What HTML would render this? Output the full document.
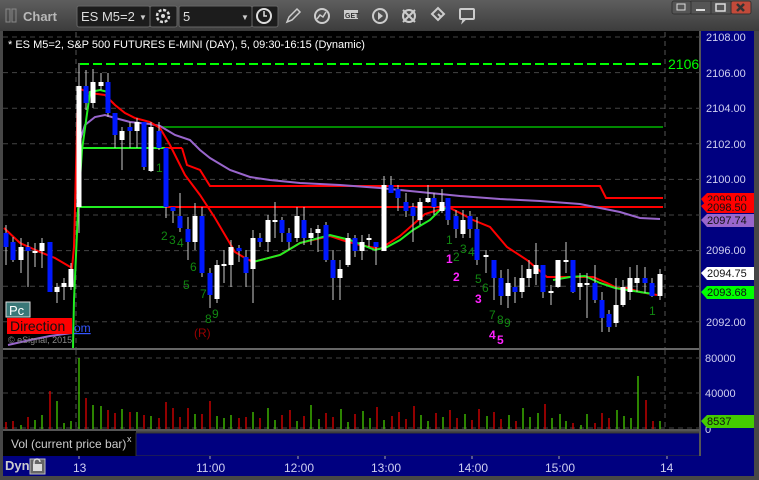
<!DOCTYPE html>
<html><head><meta charset="utf-8"><style>
body{margin:0;width:759px;height:480px;overflow:hidden;background:#4a4a4a;font-family:"Liberation Sans",sans-serif;}
svg{position:absolute;left:0;top:0}
</style></head><body>
<svg id="s" width="759" height="480" xmlns="http://www.w3.org/2000/svg" font-family="Liberation Sans, sans-serif">
<defs><linearGradient id="tb" x1="0" y1="0" x2="0" y2="1"><stop offset="0" stop-color="#5e5e5e"/><stop offset="1" stop-color="#3c3c3c"/></linearGradient></defs>
<rect x="0" y="0" width="759" height="480" fill="#474747"/>
<rect x="0" y="0" width="759" height="31" fill="url(#tb)"/>
<rect x="6" y="9" width="4" height="13" fill="none" stroke="#888"/><rect x="12" y="9" width="4" height="13" fill="none" stroke="#888"/>
<text x="23" y="21" font-size="13" font-weight="bold" fill="#b8b8b8">Chart</text>
<rect x="77" y="6" width="73" height="21" rx="2" fill="#1c1c1c" stroke="#666"/>
<text x="81" y="21" font-size="13" fill="#ddd">ES M5=2</text><text x="139" y="20" font-size="8" fill="#ccc">▼</text>
<rect x="150" y="6" width="27" height="21" rx="2" fill="#1c1c1c" stroke="#666"/>
<circle cx="163" cy="16" r="6" fill="none" stroke="#ddd" stroke-width="2.5" stroke-dasharray="3 1.7"/><circle cx="163" cy="16" r="2" fill="#ddd"/>
<rect x="179" y="6" width="73" height="21" rx="2" fill="#1c1c1c" stroke="#666"/>
<text x="183" y="21" font-size="13" fill="#ddd">5</text><text x="241" y="20" font-size="8" fill="#ccc">▼</text>
<rect x="252" y="6" width="26" height="21" rx="2" fill="#1c1c1c" stroke="#666"/>
<circle cx="264" cy="16" r="7" fill="none" stroke="#ddd" stroke-width="2"/><path d="M264 11v5h3" stroke="#ddd" stroke-width="1.5" fill="none"/>
<path d="M287 22l2-5 8-8 3 3-8 8z" fill="none" stroke="#ccc" stroke-width="1.5"/>
<circle cx="322" cy="16" r="7" fill="none" stroke="#ccc" stroke-width="2"/><path d="M317 19l3-4 3 2 3-5" stroke="#ccc" fill="none" stroke-width="1.5"/>
<rect x="344" y="10" width="14" height="9" fill="#ccc"/><text x="345" y="18" font-size="7" font-weight="bold" fill="#333">GET</text>
<circle cx="380" cy="16" r="7" fill="none" stroke="#ccc" stroke-width="2"/><path d="M378 12v8l5-4z" fill="#ccc"/>
<circle cx="409" cy="16" r="6" fill="none" stroke="#ccc" stroke-width="2"/><path d="M403 10l12 12M415 10l-12 12" stroke="#ccc" stroke-width="2"/>
<path d="M432 14l6-6 6 6-6 6z M438 14l3 3" fill="none" stroke="#ccc" stroke-width="2"/>
<rect x="460" y="9" width="14" height="10" rx="1" fill="none" stroke="#ccc" stroke-width="2"/><path d="M463 19l-1 4 4-4" fill="#ccc" stroke="#ccc"/>
<rect x="672" y="1" width="19" height="13" rx="2" fill="#555" stroke="#333"/><rect x="677" y="4" width="8" height="6" fill="none" stroke="#ddd"/>
<rect x="691" y="1" width="20" height="13" fill="#555" stroke="#333"/><rect x="696" y="9" width="9" height="2" fill="#ddd"/>
<rect x="711" y="1" width="20" height="13" fill="#555" stroke="#333"/><rect x="716" y="4" width="9" height="7" fill="none" stroke="#ddd" stroke-width="1.5"/>
<rect x="731" y="1" width="20" height="13" rx="2" fill="#c24a3a" stroke="#333"/><path d="M737 4l7 7M744 4l-7 7" stroke="#333" stroke-width="2.5"/>
<rect x="3" y="31" width="697" height="317" fill="#000"/>
<rect x="700" y="31" width="54" height="445" fill="#000080"/>
<rect x="3" y="348" width="697" height="2" fill="#666"/>
<rect x="3" y="350" width="697" height="80" fill="#000"/>
<rect x="3" y="429" width="697" height="2" fill="#555"/>
<rect x="3" y="431" width="133" height="25" fill="#000"/>
<rect x="136" y="433" width="564" height="23" fill="#000080" stroke="#333"/>
<rect x="3" y="456" width="751" height="20" fill="#000080"/>
<rect x="699" y="31" width="2" height="425" fill="#555"/>
<g id="grid" stroke="#444" stroke-dasharray="5 4"></g>
<line x1="76" y1="32" x2="76" y2="348" stroke="#555" stroke-dasharray="5 4"/>
<line x1="665" y1="32" x2="665" y2="348" stroke="#555" stroke-dasharray="5 4"/>
<line x1="76" y1="350" x2="76" y2="429" stroke="#555" stroke-dasharray="5 4"/>
<line x1="665" y1="350" x2="665" y2="429" stroke="#555" stroke-dasharray="5 4"/>
<line x1="3" y1="358" x2="700" y2="358" stroke="#444" stroke-dasharray="5 4"/>
<line x1="3" y1="393" x2="700" y2="393" stroke="#444" stroke-dasharray="5 4"/>
<line x1="3" y1="428" x2="700" y2="428" stroke="#444" stroke-dasharray="5 4"/>
<line x1="80" y1="64" x2="663" y2="64" stroke="#00ff00" stroke-width="2" stroke-dasharray="9 4"/>
<text x="668" y="69" font-size="14" fill="#00ff00">2106</text>
<line x1="160" y1="127" x2="663" y2="127" stroke="#008800" stroke-width="2"/>
<line x1="79" y1="148" x2="165" y2="148" stroke="#22ee22" stroke-width="2"/>
<line x1="165" y1="148" x2="182" y2="148" stroke="#ff0000" stroke-width="2"/>
<line x1="79" y1="207" x2="165" y2="207" stroke="#22ee22" stroke-width="2"/>
<line x1="165" y1="207" x2="663" y2="207" stroke="#ff0000" stroke-width="2"/>
<polyline points="182,148 187,165 200,170 210,186 600,186 606,198 663,198" fill="none" stroke="#ff0000" stroke-width="2"/>
<polyline points="80,140 85,125 95,117 105,115 115,118 130,122 150,124 160,126 175,135 190,140 200,150 210,158 230,170 250,177 270,180 300,183 340,185 380,188 420,192 460,196 500,199 540,201 580,204 600,208 620,212 640,218 660,219" fill="none" stroke="#9966cc" stroke-width="2"/>
<polyline points="8,345 30,340 50,336 72,333" fill="none" stroke="#9966cc" stroke-width="2"/>
<polyline points="4,228 20,243 40,252 55,258 72,268 74,247 78,88 90,93 105,95 115,105 125,113 135,118 150,122 160,128 170,145 185,175 200,195 215,218 235,252 245,258 253,262 280,255 300,243 330,236 345,241 360,245 380,249 400,236 425,214 448,207 460,213 473,220 490,227 507,247 527,260 547,277 567,277 593,277 607,283 617,288 627,288 640,292 657,295" fill="none" stroke="#ff0000" stroke-width="2"/>
<polyline points="73,348 74,300 78,210 82,150 90,92 100,90 108,92" fill="none" stroke="#22ee22" stroke-width="2"/>
<polyline points="253,262 280,255 300,243 330,235 350,240 375,250 387,247 400,240 413,230 430,220 440,210 450,207" fill="none" stroke="#22ee22" stroke-width="2"/>
<polyline points="553,280 570,277 585,276 600,283 615,288 640,292 653,294" fill="none" stroke="#22ee22" stroke-width="2"/>
<g id="candles"></g>
<g id="vol"></g>
<g font-size="12" fill="#118811">
<text x="156" y="172">1</text><text x="161" y="240">2</text><text x="169" y="244">3</text><text x="177" y="247">4</text>
<text x="190" y="271">6</text><text x="183" y="289">5</text><text x="200" y="298">7</text><text x="205" y="323">8</text><text x="212" y="318">9</text>
<text x="446" y="244">1</text><text x="453" y="261">2</text><text x="460" y="253">3</text><text x="468" y="256">4</text>
<text x="475" y="283">5</text><text x="482" y="292">6</text><text x="489" y="319">7</text><text x="497" y="324">8</text><text x="504" y="327">9</text>
<text x="649" y="315">1</text></g>
<g font-size="12" font-weight="bold" fill="#ff22ff">
<text x="446" y="263">1</text><text x="453" y="281">2</text><text x="475" y="303">3</text><text x="489" y="339">4</text><text x="497" y="344">5</text></g>
<text x="194" y="337" font-size="12" fill="#990000">(R)</text>
<text x="8" y="48" font-size="11" fill="#fff">* ES M5=2, S&amp;P 500 FUTURES E-MINI (DAY), 5, 09:30-16:15 (Dynamic)</text>
<rect x="6" y="302" width="24" height="15" fill="#3a7878" stroke="#ddd"/><text x="9" y="315" font-size="13" fill="#fff">Pc</text>
<rect x="7" y="318" width="65" height="16" fill="#ff0000"/><text x="10" y="331" font-size="14" fill="#111">Direction</text>
<text x="74" y="332" font-size="12" fill="#3355ff" text-decoration="underline">om</text>
<text x="8" y="343" font-size="9" fill="#888">© eSignal, 2015</text>
<g font-size="11" fill="#d0d0f0">
<text x="706" y="41">2108.00</text><text x="706" y="77">2106.00</text><text x="706" y="112">2104.00</text><text x="706" y="148">2102.00</text><text x="706" y="183">2100.00</text><text x="706" y="254">2096.00</text><text x="706" y="326">2092.00</text>
<text x="705" y="362">80000</text><text x="705" y="397">40000</text><text x="705" y="433">0</text>
</g>
<g font-size="11">
<path d="M701 199l6-6h47v14h-47z" fill="#ff0000"/><text x="707" y="203" fill="#111">2099.00</text>
<path d="M701 206l6-5h47v12h-47z" fill="#ff0000"/><text x="707" y="211" fill="#111">2098.50</text>
<path d="M701 220l6-6h47v13h-47z" fill="#9966cc"/><text x="707" y="224" fill="#111">2097.74</text>
<path d="M701 273l6-6h47v13h-47z" fill="#fff"/><text x="707" y="277" fill="#111">2094.75</text>
<path d="M701 292l6-6h47v13h-47z" fill="#00ff00"/><text x="707" y="296" fill="#111">2093.68</text>
<path d="M701 421l6-6h47v13h-47z" fill="#44cc00"/><text x="707" y="425" fill="#111">8537</text>
</g>
<text x="11" y="448" font-size="12" fill="#ccc">Vol (current price bar)</text>
<text x="127" y="442" font-size="9" fill="#ccc">x</text>
<text x="5" y="470" font-size="13" font-weight="bold" fill="#ccc">Dyn</text>
<rect x="30" y="459" width="15" height="15" fill="#666" stroke="#bbb"/>
<path d="M34 464v-2a3 3 0 0 1 6 0" fill="none" stroke="#ddd" stroke-width="1.5"/><rect x="33" y="464" width="9" height="7" fill="#ddd"/>
<g font-size="12" fill="#d0d0f0">
<text x="73" y="472">13</text><text x="196" y="472">11:00</text><text x="284" y="472">12:00</text><text x="371" y="472">13:00</text><text x="458" y="472">14:00</text><text x="545" y="472">15:00</text><text x="660" y="472">14</text></g>
<g stroke="#aaa"><line x1="79" y1="456" x2="79" y2="459"/><line x1="210" y1="456" x2="210" y2="459"/><line x1="298" y1="456" x2="298" y2="459"/><line x1="385" y1="456" x2="385" y2="459"/><line x1="472" y1="456" x2="472" y2="459"/><line x1="559" y1="456" x2="559" y2="459"/><line x1="667" y1="456" x2="667" y2="459"/></g>
</svg>
<script>
var NS="http://www.w3.org/2000/svg";
function el(p,t,a){var e=document.createElementNS(NS,t);for(var k in a)e.setAttribute(k,a[k]);document.getElementById(p).appendChild(e);}
for(var i=0;i<9;i++){var y=37+35.6*i;el("grid","line",{x1:3,y1:y,x2:700,y2:y});}
var C=[[6,233,247,225,265,0],[13,242,260,237,262,0],[21,247,260,238,273,1],[28,247,251,242,287,0],[35,251,253,243,267,1],[42,243,251,238,268,1],[50,242,292,242,292,0],[57,287,292,283,303,1],[64,283,287,278,300,1],[71,269,287,263,290,1],
[79,86,207,63,233,1],[86,86,103,70,110,0],[93,82,103,69,108,1],[101,82,86,73,90,1],[108,82,113,73,117,0],[115,113,135,113,148,0],[122,131,140,127,170,1],[130,127,131,122,148,0],[137,122,131,118,148,1],[144,122,167,122,170,0],[151,127,171,122,172,1],[159,131,148,122,150,0],[166,148,207,148,218,0],[173,207,211,207,223,0],[180,216,228,193,232,0],[188,229,242,217,260,0],[195,216,242,203,250,1],[202,216,273,207,277,0],[210,273,295,268,308,0],[217,265,299,260,303,1],
[224,264,265,250,283,1],[231,247,265,240,287,1],[239,248,251,245,262,0],[246,257,273,250,287,0],[253,238,269,230,303,1],[260,238,242,233,247,0],[268,220,242,215,252,1],[275,220,222,202,238,1],[282,220,233,217,242,0],[289,233,242,228,250,0],[297,216,238,207,242,1],[304,220,238,207,245,0],[311,233,238,228,245,1],[318,229,233,225,252,1],[326,225,260,222,262,0],[333,260,278,250,300,0],[340,269,278,260,300,1],
[348,238,265,233,267,1],[355,238,251,235,257,0],[362,242,251,235,260,1],[369,238,239,234,247,1],[376,242,247,242,265,0],[384,185,251,176,251,1],[391,185,193,176,193,0],[398,189,198,185,211,0],[406,202,211,193,217,0],[413,207,216,203,242,0],[420,202,220,198,225,1],[428,198,202,185,203,1],[434,198,207,193,215,0],[442,202,211,189,213,1],[448,198,220,198,225,0],[456,216,229,210,238,0],[463,220,234,210,238,1],[470,216,229,211,238,0],[477,229,260,217,265,0],[486,255,257,250,273,1],[494,260,278,260,300,0],[501,278,296,270,305,0],[508,283,296,269,308,1],[515,287,292,277,303,0],[522,278,292,265,298,1],[529,269,278,260,287,1],[536,265,274,243,285,1],[543,265,292,265,298,0],[551,291,292,285,305,1],[558,260,287,260,288,1],[566,260,261,242,273,1],[573,260,292,260,293,0],[580,283,287,273,300,1],[587,283,284,273,318,1],[595,283,300,265,303,0],[602,300,318,292,332,0],[609,314,327,310,332,0],[616,305,323,278,327,1],[623,287,305,280,307,1],[630,278,292,267,300,1],[637,278,283,265,292,1],[645,278,283,267,293,0],[652,283,296,278,297,0],[660,274,296,269,300,1]];
C.forEach(function(c){var col=c[5]?"#fff":"#0018ff";el("candles","line",{x1:c[0],y1:c[3],x2:c[0],y2:c[4],stroke:"#ccc","stroke-width":1});el("candles","rect",{x:c[0]-2.5,y:c[1],width:5,height:Math.max(2,c[2]-c[1]),fill:col});});
var V=[[6,'r',422],[13,'r',421],[21,'g',425],[28,'r',417],[35,'g',420],[42,'g',415],[50,'r',391],[57,'g',401],[64,'g',423],[71,'g',421],[79,'g',358],[86,'r',398],[93,'g',405],[101,'g',406],[108,'r',410],[115,'r',413],[122,'g',409],[130,'r',412],[137,'g',412],[144,'r',415],[151,'g',416],[159,'r',418],[166,'r',402],[173,'r',408],[180,'r',417],[188,'r',408],[195,'g',414],[202,'r',414],[210,'r',401],[217,'g',416],[224,'g',418],[231,'g',415],[239,'r',418],[246,'r',417]];
var seq=[412,418,408,420,415,410,421,416,405,419,413,417,409,422,414,411,418,407,420,416,412,419,406,415,421,413,417,410,418,414,420,409,416,412,419,415,421,408,417,413,404,418,414];
for(var j=0,x=253;x<560;x+=7.3,j++){var cc=C.find(function(c){return Math.abs(c[0]-x)<4;});var col=cc?(cc[5]?'g':'r'):'g';V.push([Math.round(x),col,seq[j%seq.length]]);}
[[566,'g',421],[573,'r',423],[581,'g',425],[587,'g',414],[595,'r',423],[602,'r',413],[609,'r',418],[617,'g',410],[624,'g',416],[631,'g',418],[638,'g',376],[646,'r',400],[653,'r',421],[660,'g',421]].forEach(function(v){V.push(v);});
V.forEach(function(v){el("vol","line",{x1:v[0],y1:v[2],x2:v[0],y2:429,stroke:v[1]=='r'?"#e00000":"#44cc00","stroke-width":1.3});});
</script>
</body></html>
